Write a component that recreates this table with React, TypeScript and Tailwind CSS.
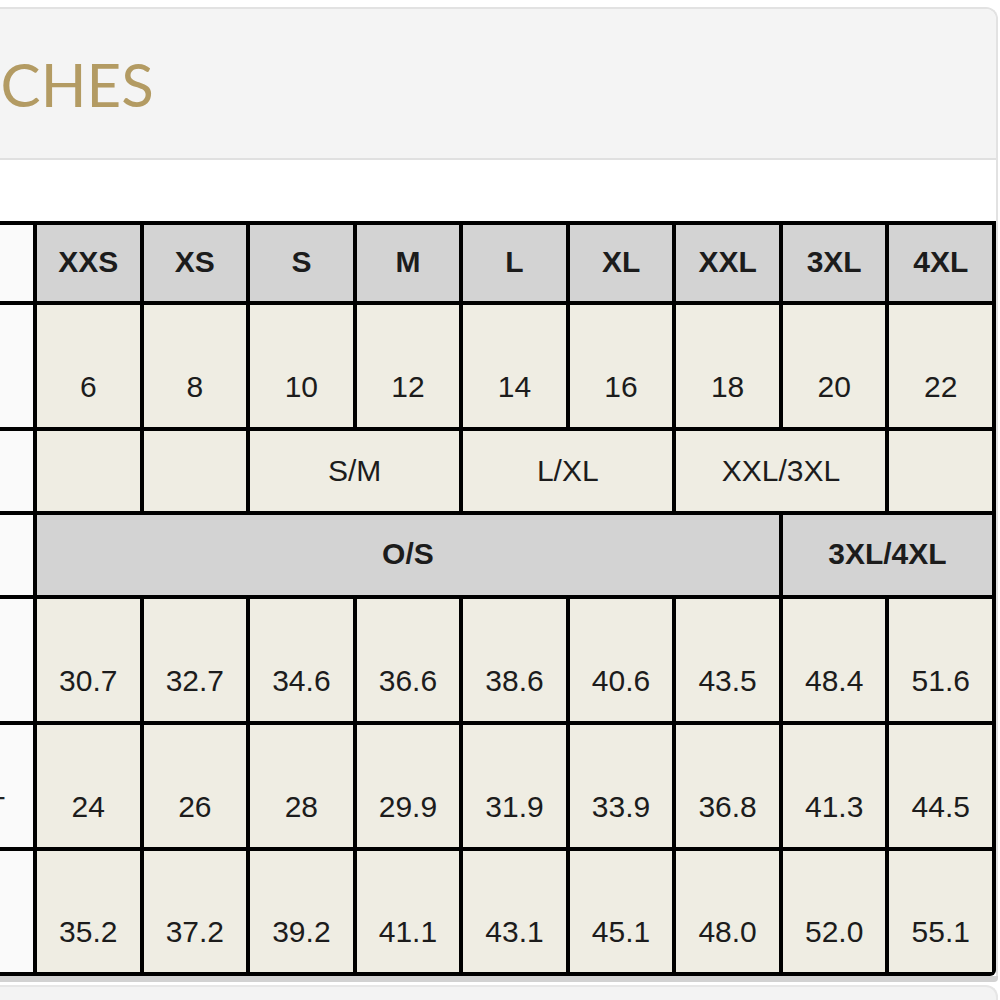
import React from "react";

type Cell = { t: string; span?: number };

const sizes = ["XXS", "XS", "S", "M", "L", "XL", "XXL", "3XL", "4XL"];
const us = ["6", "8", "10", "12", "14", "16", "18", "20", "22"];
const bust = ["30.7", "32.7", "34.6", "36.6", "38.6", "40.6", "43.5", "48.4", "51.6"];
const waist = ["24", "26", "28", "29.9", "31.9", "33.9", "36.8", "41.3", "44.5"];
const hip = ["35.2", "37.2", "39.2", "41.1", "43.1", "45.1", "48.0", "52.0", "55.1"];

const spanClass: Record<number, string> = {
  1: "col-span-1",
  2: "col-span-2",
  7: "col-span-7",
};

function Label({ text }: { text: string }) {
  return (
    <div className="bg-[#fafafa] flex items-end justify-end pb-[25px] pr-[28px] text-[30px] leading-[30px] text-[#222]">
      {text}
    </div>
  );
}

function HeadRow({ cells }: { cells: Cell[] }) {
  return (
    <>
      <div className="bg-[#fafafa]" />
      {cells.map((c, i) => (
        <div
          key={i}
          className={
            "bg-[#d3d3d3] flex items-center justify-center text-[30px] leading-[30px] font-bold text-[#1c1c1c] pb-[2px] " +
            spanClass[c.span ?? 1]
          }
        >
          {c.t}
        </div>
      ))}
    </>
  );
}

function MidRow({ cells }: { cells: Cell[] }) {
  return (
    <>
      <div className="bg-[#fafafa]" />
      {cells.map((c, i) => (
        <div
          key={i}
          className={
            "bg-[#efede3] flex items-center justify-center text-[30px] leading-[30px] text-[#1c1c1c] " +
            spanClass[c.span ?? 1]
          }
        >
          {c.t}
        </div>
      ))}
    </>
  );
}

function DataRow({ label, values }: { label: string; values: string[] }) {
  return (
    <>
      <Label text={label} />
      {values.map((v, i) => (
        <div
          key={i}
          className="bg-[#efede3] flex items-end justify-center pb-[25px] text-[30px] leading-[30px] text-[#1c1c1c]"
        >
          {v}
        </div>
      ))}
    </>
  );
}

export default function App() {
  return (
    <div className="w-[1000px] h-[1000px] bg-white overflow-hidden font-['Liberation_Sans',Arial,sans-serif]">
      <div className="pt-[7px] pr-[2px]">
        <div className="-ml-[120px] border-2 border-b-0 border-[#e2e2e2] rounded-tr-[12px] overflow-hidden">
          <div className="h-[151px] bg-[#f4f4f4] border-b-2 border-[#e0e0e0] flex items-center pl-[56px]">
            <h2 className="font-['Lato',sans-serif] text-[60px] leading-none text-[#b39b63] font-normal tracking-[0px]">
              INCHES
            </h2>
          </div>
          <div className="bg-white pt-[61px] pl-[18px]">
            <div className="bg-black p-[4px] grid grid-cols-[129px_repeat(9,minmax(0,1fr))] grid-rows-[76px_122px_80px_80px_122px_122px_121px] gap-[4px] rounded-br-[6px]">
              <HeadRow cells={sizes.map((t) => ({ t }))} />
              <DataRow label="" values={us} />
              <MidRow
                cells={[
                  { t: "" },
                  { t: "" },
                  { t: "S/M", span: 2 },
                  { t: "L/XL", span: 2 },
                  { t: "XXL/3XL", span: 2 },
                  { t: "" },
                ]}
              />
              <HeadRow
                cells={[
                  { t: "O/S", span: 7 },
                  { t: "3XL/4XL", span: 2 },
                ]}
              />
              <DataRow label="" values={bust} />
              <DataRow label="WAIST" values={waist} />
              <DataRow label="" values={hip} />
            </div>
          </div>
        </div>
        <div className="-ml-[120px] h-[6px] bg-[#d2d2d2] rounded-br-[4px]" />
        <div className="-ml-[120px] mt-[3px] h-[40px] bg-[#f3f3f3] border-2 border-b-0 border-[#e6e6e6] rounded-tr-[12px]" />
      </div>
    </div>
  );
}
